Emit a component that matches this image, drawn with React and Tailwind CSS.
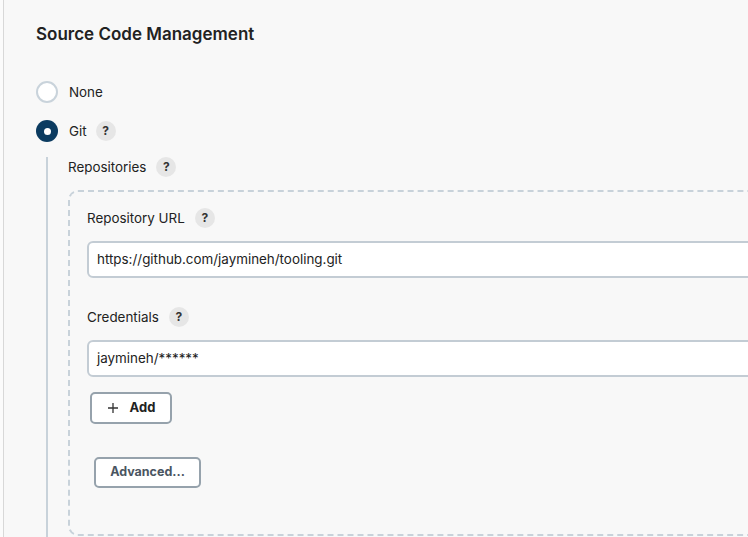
import React from 'react';

const font = { fontFamily: 'Inter, "Noto Sans", sans-serif' };

const Help = () => (
    <span className="inline-flex h-[20px] w-[20px] items-center justify-center rounded-full bg-[#e6e6e6] text-[12px] font-bold text-[#333]">
        ?
    </span>
);

const Radio = ({ checked, label, help }) => (
    <div className="flex h-[22px] items-center">
        {checked ? (
            <span className="flex h-[22px] w-[22px] items-center justify-center rounded-full bg-[#0b3b60]">
                <span className="h-[7px] w-[7px] rounded-full bg-white" />
            </span>
        ) : (
            <span className="h-[22px] w-[22px] rounded-full border-2 border-[#c9d3db] bg-white" />
        )}
        <span className="ml-[11px] text-[13.4px] text-[#222]">{label}</span>
        {help && <span className="ml-[9px] flex"><Help /></span>}
    </div>
);

const Label = ({ children }) => (
    <div className="flex h-[20px] items-center gap-[10px] text-[13.4px] text-[#222]">
        <span>{children}</span>
        <Help />
    </div>
);

const TextInput = ({ value }) => (
    <div className="flex h-[37px] items-center rounded-[6px] border-2 border-[#c3ccd4] bg-white pl-[8px] text-[13.4px] text-[#222]">
        {value}
    </div>
);

export default function App() {
    return (
        <div className="h-[537px] w-[748px] overflow-hidden bg-[#fbfbfb] pl-[3px]" style={font}>
            <div className="h-full border-l border-[#d8d8d8] bg-[#f8f8f8] pl-[32px] pt-[22px]">
                <h2 className="text-[17px] leading-[24px] font-semibold text-[#222]">Source Code Management</h2>

                <div className="mt-[35px]">
                    <Radio label="None" />
                </div>
                <div className="mt-[17px]">
                    <Radio checked label="Git" help />
                </div>

                <div className="mt-[15px] ml-[10px] flex h-[400px] border-l-2 border-[#c8d2da] pl-[20px]">
                    <div className="w-[720px] shrink-0">
                        <Label>Repositories</Label>
                        <div className="mt-[13px] h-[346px] rounded-[10px] border-2 border-dashed border-[#c8d2da] pl-[17px] pt-[16px]">
                            <Label>Repository URL</Label>
                            <div className="mt-[13px]">
                                <TextInput value="https://github.com/jaymineh/tooling.git" />
                            </div>

                            <div className="mt-[29px]">
                                <Label>Credentials</Label>
                            </div>
                            <div className="mt-[13px]">
                                <TextInput value="jaymineh/******" />
                            </div>

                            <button className="mt-[15px] ml-[3px] flex h-[32px] w-[82px] items-center justify-center gap-[11px] rounded-[5px] border-2 border-[#96a2ac] bg-white text-[13px] font-bold text-[#222]">
                                <svg width="12" height="12" viewBox="0 0 12 12" fill="none" stroke="#333" strokeWidth="1.3">
                                    <path d="M6 1v10M1 6h10" />
                                </svg>
                                <span>Add</span>
                            </button>

                            <button className="mt-[33px] ml-[7px] flex h-[31px] w-[107px] items-center justify-center rounded-[5px] border-2 border-[#96a2ac] bg-white text-[12.5px] font-bold text-[#4a5561]">
                                Advanced...
                            </button>
                        </div>
                    </div>
                </div>
            </div>
        </div>
    );
}
